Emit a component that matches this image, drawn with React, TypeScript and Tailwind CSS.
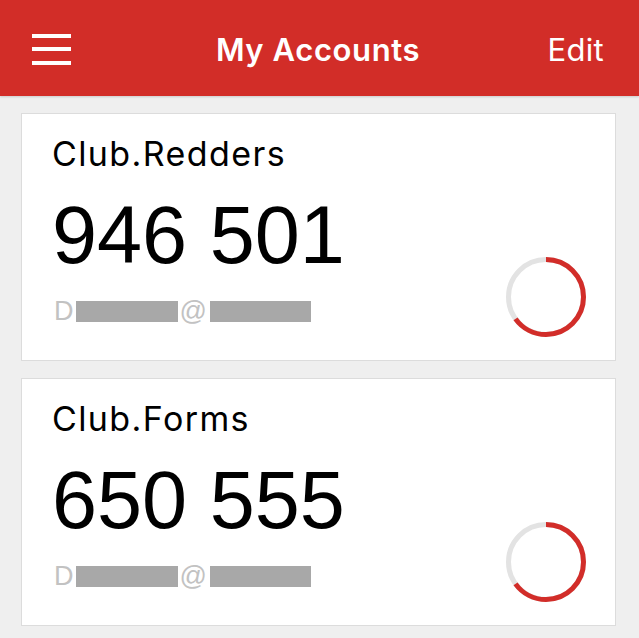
const accounts = [
  { name: "Club.Redders", code: "946 501", progress: 0.65 },
  { name: "Club.Forms", code: "650 555", progress: 0.65 },
];

const Ring = ({ progress }: { progress: number }) => {
  const r = 37.5;
  const c = 2 * Math.PI * r;
  return (
    <svg width="80" height="80" viewBox="0 0 80 80" className="shrink-0">
      <circle cx="40" cy="40" r={r} fill="none" stroke="#e3e3e3" strokeWidth="5" />
      <circle
        cx="40"
        cy="40"
        r={r}
        fill="none"
        stroke="#d22d29"
        strokeWidth="5"
        strokeDasharray={`${c * progress} ${c}`}
        transform="rotate(-90 40 40)"
      />
    </svg>
  );
};

const AccountCard = ({ name, code, progress }: { name: string; code: string; progress: number }) => {
  return (
    <div className="flex justify-between h-[248px] bg-white border border-[#dcdcdc] pl-[30px] pr-[29px]">
      {/* Left: name, code, email */}
      <div className="flex flex-col">
        <div className="mt-[23px] text-[34px] leading-[34px] tracking-[1.4px] text-black font-['Inter',sans-serif]">
          {name}
        </div>
        <div className="mt-[24px] text-[81px] leading-[81px] text-black font-['Liberation_Sans',Arial,sans-serif]">
          {code}
        </div>
        <div className="mt-[22px] pl-[2px] flex items-center h-[27px] text-[27px] leading-[27px] text-[#c2c2c2] font-['Liberation_Sans',Arial,sans-serif]">
          <span>D</span>
          <span className="ml-[2px] w-[102px] h-[21px] bg-[#a8a8a8]" />
          <span className="ml-[2px]">@</span>
          <span className="ml-[3px] w-[101px] h-[21px] bg-[#a8a8a8]" />
        </div>
      </div>

      {/* Right: countdown ring */}
      <div className="self-end mb-[23px]">
        <Ring progress={progress} />
      </div>
    </div>
  );
};

export default function App() {
  return (
    <div className="w-[639px] h-[638px] overflow-hidden bg-[#efefef] font-['Inter',sans-serif]">
      {/* Header */}
      <div className="relative z-10 grid grid-cols-[1fr_auto_1fr] items-center h-[96px] bg-[#d22d28] pl-[32px] pr-[35px] shadow-[0_1px_2px_rgba(0,0,0,0.15)]">
        <div className="flex flex-col gap-[9.5px] w-[39px] mt-[2px]">
          <span className="h-[4px] bg-white" />
          <span className="h-[4px] bg-white" />
          <span className="h-[4px] bg-white" />
        </div>
        <div className="pt-[5px] text-white text-[31px] font-semibold tracking-[0.6px]">My Accounts</div>
        <div className="pt-[5px] justify-self-end text-white text-[31px] tracking-[0.3px]">Edit</div>
      </div>

      {/* Accounts */}
      <div className="flex flex-col gap-[17px] pt-[17px] pl-[21px] pr-[23px]">
        {accounts.map((a) => (
          <AccountCard key={a.name} {...a} />
        ))}
      </div>
    </div>
  );
}
